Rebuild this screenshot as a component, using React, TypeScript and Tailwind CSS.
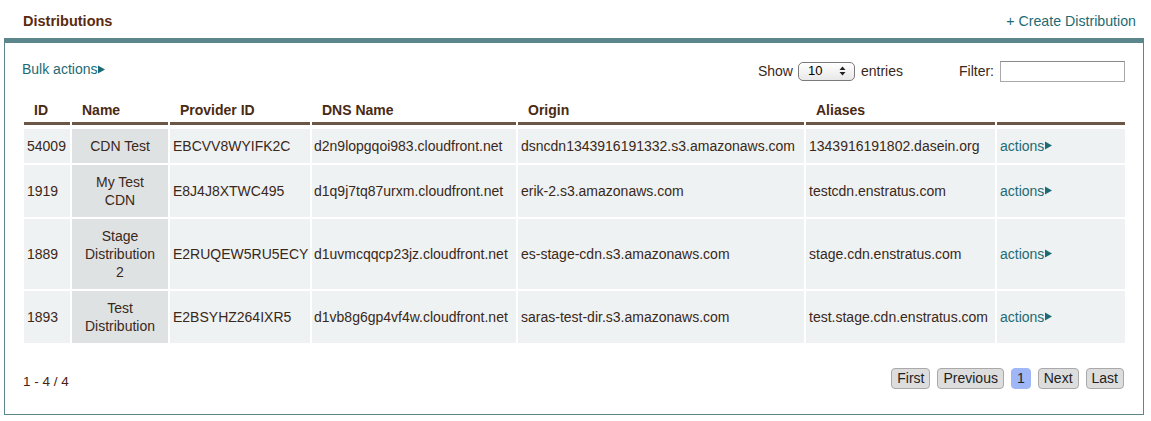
import React from "react";

const rows = [
  { id: "54009", name: ["CDN Test"], pid: "EBCVV8WYIFK2C", dns: "d2n9lopgqoi983.cloudfront.net", origin: "dsncdn1343916191332.s3.amazonaws.com", alias: "1343916191802.dasein.org", h: "h-[34px]" },
  { id: "1919", name: ["My Test", "CDN"], pid: "E8J4J8XTWC495", dns: "d1q9j7tq87urxm.cloudfront.net", origin: "erik-2.s3.amazonaws.com", alias: "testcdn.enstratus.com", h: "h-[52px]" },
  { id: "1889", name: ["Stage", "Distribution", "2"], pid: "E2RUQEW5RU5ECY", dns: "d1uvmcqqcp23jz.cloudfront.net", origin: "es-stage-cdn.s3.amazonaws.com", alias: "stage.cdn.enstratus.com", h: "h-[70px]" },
  { id: "1893", name: ["Test", "Distribution"], pid: "E2BSYHZ264IXR5", dns: "d1vb8g6gp4vf4w.cloudfront.net", origin: "saras-test-dir.s3.amazonaws.com", alias: "test.stage.cdn.enstratus.com", h: "h-[52px]" },
];

function Tri() {
  return (
    <svg width="7" height="9" viewBox="0 0 7 9" className="inline-block ml-[1px] mb-[1px]">
      <path d="M0 0.5 L7 4.5 L0 8.5 Z" fill="#1d6b74" />
    </svg>
  );
}

const headers = ["ID", "Name", "Provider ID", "DNS Name", "Origin", "Aliases", ""];

export default function App() {
  return (
    <div
      className="w-[1151px] h-[421px] bg-white text-[14px] text-[#3a2819]"
      style={{ fontFamily: '"Liberation Sans", Arial, Helvetica, sans-serif' }}
    >
      <div className="flex items-center justify-between h-[38px] pl-[23px] pr-[15px] pt-[5px]">
        <div className="font-bold text-[14.5px] text-[#5a2a10]">Distributions</div>
        <div className="text-[#1d6b74] text-[14.2px]">+ Create Distribution</div>
      </div>
      <div className="ml-[4px] w-[1140px] h-[377px] border-t-[5px] border-x border-b border-[#5b878c] flex flex-col">
        <div className="flex items-center h-[51px] pt-[2px] pl-[17px] pr-[18px]">
          <div className="text-[#1d6b74] flex items-center">
            Bulk actions
            <Tri />
          </div>
          <div className="ml-auto flex items-center pt-[3px]">
            <span>Show</span>
            <div className="ml-[5px] w-[57px] h-[19px] rounded-[5px] border border-[#7a7a7a] bg-gradient-to-b from-white to-[#e8e8e8] flex items-center pl-[9px] text-[13px] text-black">
              <span className="w-[31px]">10</span>
              <svg width="7" height="10" viewBox="0 0 7 10">
                <path d="M3.5 0.5 L6.5 4 L0.5 4 Z M3.5 9.5 L6.5 6 L0.5 6 Z" fill="#222" />
              </svg>
            </div>
            <span className="ml-[6px]">entries</span>
            <span className="ml-[56px]">Filter:</span>
            <div className="ml-[6px] w-[125px] h-[21px] border border-[#a8a8a8] border-t-[#8a8a8a] bg-white" />
          </div>
        </div>
        <div className="ml-[19px] grid grid-cols-[46px_96px_140px_204px_286px_189px_128px] gap-x-[2px]">
          {headers.map((h, i) => (
            <div
              key={i}
              className="h-[31px] pl-[10px] pt-[7px] font-bold text-[#4a2a12] border-b-[3px] border-[#6c5646] leading-[18px]"
            >
              {h}
            </div>
          ))}
        </div>
        <div className="ml-[19px] mt-[4px] grid grid-cols-[46px_96px_140px_204px_286px_189px_128px] gap-x-[2px] gap-y-[2px] leading-[18px]">
          {rows.map((r) => (
            <React.Fragment key={r.id}>
              <div className={`${r.h} bg-[#eef2f3] px-[3px] flex items-center`}>{r.id}</div>
              <div className={`${r.h} bg-[#dfe2e3] px-[2px] flex flex-col items-center justify-center text-center`}>
                {r.name.map((n) => (
                  <div key={n}>{n}</div>
                ))}
              </div>
              <div className={`${r.h} bg-[#eef2f3] px-[3px] flex items-center`}>{r.pid}</div>
              <div className={`${r.h} bg-[#eef2f3] px-[2px] flex items-center`}>{r.dns}</div>
              <div className={`${r.h} bg-[#eef2f3] px-[3px] flex items-center`}>{r.origin}</div>
              <div className={`${r.h} bg-[#eef2f3] px-[3px] flex items-center`}>{r.alias}</div>
              <div className={`${r.h} bg-[#eef2f3] px-[3px] flex items-center text-[#1d6b74]`}>
                actions
                <Tri />
              </div>
            </React.Fragment>
          ))}
        </div>
        <div className="flex items-start justify-between pl-[18px] pr-[19px] mt-[25px]">
          <div className="text-[13.5px] leading-[18px] text-[#4a2210] pt-[5px]">1 - 4 / 4</div>
          <div className="flex items-center gap-[7px] text-[14px] text-[#222]">
            {["First", "Previous", "1", "Next", "Last"].map((b) => (
              <div
                key={b}
                className={`h-[21px] px-[5px] rounded-[4px] border flex items-center ${
                  b === "1" ? "bg-[#9fb6f7] border-[#9fb6f7]" : "bg-[#dddddd] border-[#a9a9a9]"
                }`}
              >
                {b}
              </div>
            ))}
          </div>
        </div>
      </div>
    </div>
  );
}
